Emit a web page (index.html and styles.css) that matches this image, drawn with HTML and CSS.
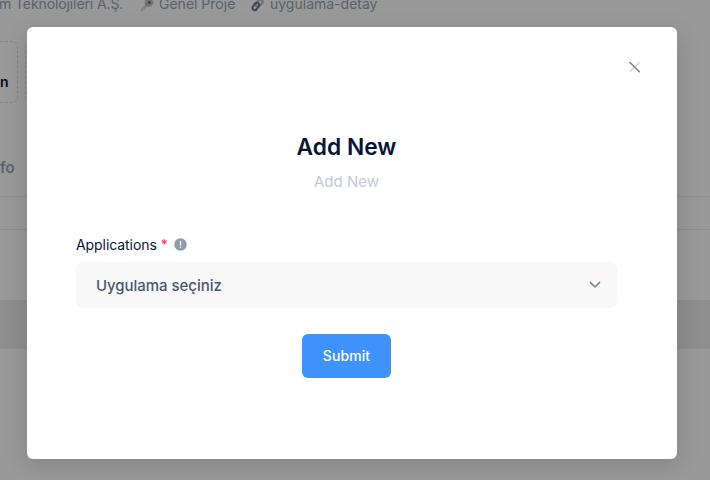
FILE: index.html
```html
<!DOCTYPE html>
<html lang="tr">
<head>
<meta charset="utf-8">
<title>Add New</title>
<link rel="stylesheet" href="styles.css">
</head>
<body>
<main class="page">
  <div class="meta">
    <span class="meta-company">m Teknolojileri A.Ş.</span>
    <span class="meta-item meta-project">
      <svg class="meta-icon" width="14" height="14" viewBox="0 0 14 14"><path opacity=".35" fill="#8790a8" d="M1 11 6 6l2 2-3.500 3.500H3V13H1z"/><circle cx="9" cy="4.500" r="4.300" fill="#8790a8" opacity=".55"/><circle cx="9.500" cy="4.500" r="1.500" fill="#667088"/></svg>
      Genel Proje
    </span>
    <span class="meta-item">
      <svg class="meta-icon" width="14" height="14" viewBox="0 0 14 14" fill="none" stroke-width="2"><rect x="6" y="1" width="4.500" height="8" rx="2.250" transform="rotate(45 8 5)" stroke="#b5bac8"/><rect x="2.500" y="4.500" width="4.500" height="8" rx="2.250" transform="rotate(35 5 8.500)" stroke="#697288"/></svg>
      uygulama-detay
    </span>
  </div>
  <div class="stats"><div class="stat">n</div><div class="stat"></div></div>
  <div class="tab">fo</div>
  <div class="toolbar"></div>
  <div class="table-head"></div>
</main>
<div class="backdrop">
  <section class="modal" role="dialog">
    <header class="modal-header">
      <button class="close" aria-label="Close">
        <svg width="12" height="12" viewBox="0 0 12 12" fill="none" stroke="#78829d" stroke-width="1.600" stroke-linecap="round"><path opacity=".3" d="M10.200 1.500l-9 9"/><path d="M1 1.500l9.300 9.300"/></svg>
      </button>
    </header>
    <h1 class="title">Add New</h1>
    <p class="subtitle">Add New</p>
    <form class="form">
      <div class="label">Applications <span class="required">*</span>
        <svg class="info" width="13" height="13" viewBox="0 0 13 13"><circle cx="6.500" cy="6.500" r="6.200" fill="#9099b0"/><path d="M6.500 3.500v3.600M6.500 9v.3" stroke="#fff" stroke-width="1.300" stroke-linecap="round"/></svg>
      </div>
      <div class="select"><span>Uygulama seçiniz</span>
        <svg width="12" height="8" viewBox="0 0 12 8" fill="none" stroke="#78829d" stroke-width="1.700" stroke-linecap="round" stroke-linejoin="round"><path d="M1.500 1.500 6 6l4.500-4.500"/></svg>
      </div>
      <button class="submit" type="button">Submit</button>
    </form>
  </section>
</div>
</body>
</html>
```
FILE: styles.css
```css
* { box-sizing: border-box; }
body {
  margin: 0;
  height: 480px;
  overflow: hidden;
  background: #fff;
  font-family: Inter, sans-serif;
}
.page { height: 480px; overflow: hidden; }
.meta {
  display: flex;
  height: 41px;
  margin-top: -5px;
  color: #99a1b7;
  font-size: 14px;
  line-height: 18px;
  white-space: nowrap;
}
.meta-company { width: 141px; margin-left: -1px; letter-spacing: -0.1px; }
.meta-item { display: flex; gap: 5px; }
.meta-project { width: 111px; }
.meta-icon { margin-top: 3px; }
.stats { display: flex; gap: 7px; height: 62px; margin-top: 5px; }
.stat {
  width: 125px;
  padding-right: 9px;
  border: 1px dashed #dbdfe9;
  border-radius: 6px;
  color: #071437;
  font-size: 14px;
  font-weight: 600;
  line-height: 79px;
  text-align: right;
}
.stat:first-child { width: 18px; border-left: 0; border-radius: 0 6px 6px 0; }
.tab {
  height: 93px;
  padding-top: 56px;
  color: #99a1b7;
  font-size: 15px;
  font-weight: 600;
  line-height: 18px;
}
.toolbar {
  height: 34px;
  border-top: 1px solid #ececee;
  border-bottom: 1px solid #ececee;
}
.table-head { height: 49px; margin-top: 70px; background: #ededed; }
.backdrop {
  position: absolute;
  inset: 0;
  padding: 27px 33px 21px 27px;
  background: rgba(0, 0, 0, 0.4);
}
.modal {
  height: 432px;
  border-radius: 6px;
  background: #fff;
  box-shadow: 0 6px 24px rgba(0, 0, 0, 0.15);
  color: #071437;
}
.modal-header { display: flex; justify-content: flex-end; height: 103px; padding: 34px 36px 0 0; }
.close { display: block; width: 12px; height: 12px; padding: 0; border: 0; background: none; }
.close svg, .select svg { display: block; }
.title {
  margin: 0 11px 0 0;
  font-size: 22.750px;
  font-weight: 600;
  line-height: 34px;
  text-align: center;
}
.subtitle {
  margin: 7px 11px 0 0;
  color: #c4cada;
  font-size: 15px;
  line-height: 22px;
  text-align: center;
}
.form {
  display: flex;
  flex-direction: column;
  margin: 41px 60px 0 49px;
}
.label { display: flex; align-items: center; height: 20px; font-size: 14px; letter-spacing: -0.07px; }
.required { margin-left: 4px; color: #f8285a; }
.info { margin-left: 6px; }
.select {
  display: flex;
  align-items: center;
  justify-content: space-between;
  height: 46px;
  margin-top: 8px;
  padding: 0 16px 0 20px;
  border-radius: 7px;
  background: #f8f8f8;
  color: #4b5675;
  font-size: 15px;
  font-weight: 500;
  letter-spacing: -0.04px;
}
.submit {
  align-self: center;
  width: 89px;
  height: 44px;
  margin-top: 26px;
  padding: 0 0 2px;
  border: 0;
  border-radius: 6px;
  background: #3e92f9;
  color: #fff;
  font: 500 14px Inter, sans-serif;
  letter-spacing: 0.1px;
}
```
